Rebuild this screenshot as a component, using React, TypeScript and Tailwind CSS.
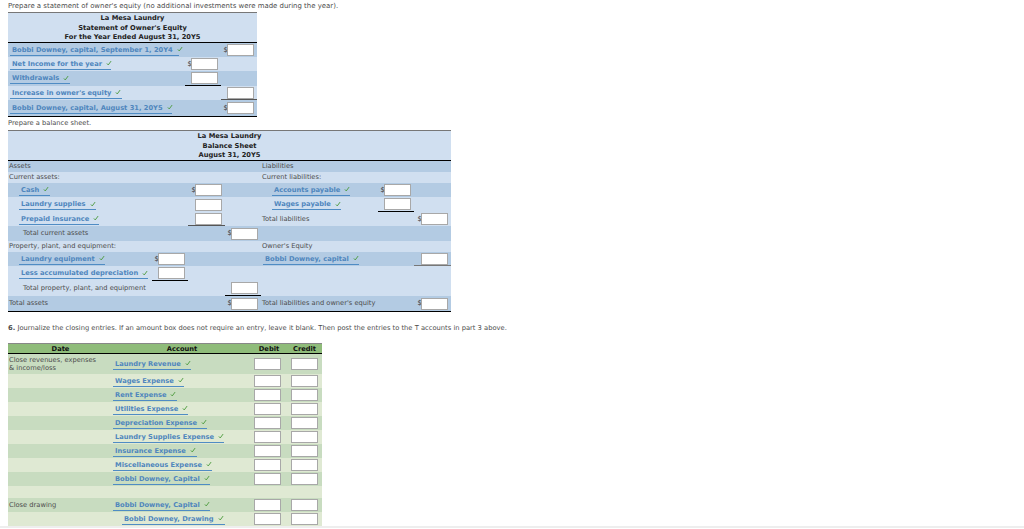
const font = "[font-family:'DejaVu_Sans',Verdana,sans-serif]"

const Check = () => (
  <svg viewBox="0 0 8 8" className="ml-[4px] inline-block h-[6px] w-[6px] align-[-0.5px]">
    <path d="M1.2 4.6 L3 6.6 L6.8 1.4" fill="none" stroke="#4a9a3a" strokeWidth="1.2" />
  </svg>
)

const Box = ({ dollar, className = "pr-[3px]" }: { dollar?: boolean; className?: string }) => (
  <div className={`flex h-full items-center justify-end ${className}`}>
    {dollar && <span className="mr-[-1px] text-[7px] text-[#333]">$</span>}
    <div className="h-[12px] w-[27px] border border-[#a8a8a8] bg-white" />
  </div>
)

const Account = ({ name, width }: { name: string; width: string }) => (
  <div className={`whitespace-nowrap border-b border-[#4f8cc4] pl-[2px] font-bold leading-[10px] text-[#4f86bd] ${width}`}>
    {name}
    <Check />
  </div>
)

function OwnersEquity() {
  const row = "grid grid-cols-[177px_36px_36px] items-center"
  return (
    <div className="ml-[8px] mt-[7px] w-[249px] border-b border-black bg-[#d0dff0] text-[6.7px]">
      <div className="flex h-[31px] flex-col items-center justify-center border-t border-[#777] border-b border-b-black pt-[2px] font-bold leading-[9.5px] text-[#222]">
        <div>La Mesa Laundry</div>
        <div>Statement of Owner's Equity</div>
        <div>For the Year Ended August 31, 20Y5</div>
      </div>
      <div className={`${row} h-[14px] bg-[#b3cbe3]`}>
        <div className="pl-[2px]"><Account name="Bobbi Downey, capital, September 1, 20Y4" width="w-[169px]" /></div>
        <div />
        <Box dollar />
      </div>
      <div className={`${row} h-[14px]`}>
        <div className="pl-[2px]"><Account name="Net Income for the year" width="w-[101px]" /></div>
        <Box dollar />
        <div />
      </div>
      <div className={`${row} h-[15px] bg-[#b3cbe3]`}>
        <div className="pl-[2px]"><Account name="Withdrawals" width="w-[60px]" /></div>
        <Box className="border-b border-black pr-[3px]" />
        <div />
      </div>
      <div className={`${row} h-[14px]`}>
        <div className="pl-[2px]"><Account name="Increase in owner's equity" width="w-[112px]" /></div>
        <div />
        <Box className="border-b border-[#555] pr-[3px]" />
      </div>
      <div className={`${row} h-[16px] bg-[#b3cbe3]`}>
        <div className="pl-[2px]"><Account name="Bobbi Downey, capital, August 31, 20Y5" width="w-[162px]" /></div>
        <div />
        <Box dollar />
      </div>
    </div>
  )
}

function BalanceRow({ h, dark, left, c1, c2, c3, right, c4, c5 }: {
  h: string
  dark?: boolean
  left?: React.ReactNode
  c1?: React.ReactNode
  c2?: React.ReactNode
  c3?: React.ReactNode
  right?: React.ReactNode
  c4?: React.ReactNode
  c5?: React.ReactNode
}) {
  return (
    <div className={`grid grid-cols-[144px_36px_37px_36px_117px_36px_37px] ${h} ${dark ? "bg-[#b3cbe3]" : ""}`}>
      <div className="flex items-center">{left}</div>
      <div>{c1}</div>
      <div>{c2}</div>
      <div>{c3}</div>
      <div className="flex items-center">{right}</div>
      <div>{c4}</div>
      <div>{c5}</div>
    </div>
  )
}

const Plain = ({ text, indent = "pl-[1px]" }: { text: string; indent?: string }) => (
  <div className={`whitespace-nowrap text-[#4d4d4d] ${indent}`}>{text}</div>
)

function BalanceSheet() {
  return (
    <div className="ml-[8px] mt-[1px] w-[443px] border-b border-black bg-[#d0dff0] text-[6.7px]">
      <div className="flex h-[31px] flex-col items-center justify-center border-t border-[#777] border-b border-b-black pt-[2px] font-bold leading-[9.5px] text-[#222]">
        <div>La Mesa Laundry</div>
        <div>Balance Sheet</div>
        <div>August 31, 20Y5</div>
      </div>
      <BalanceRow h="h-[11px]" dark left={<Plain text="Assets" />} right={<Plain text="Liabilities" />} />
      <BalanceRow h="h-[11px]" left={<Plain text="Current assets:" />} right={<Plain text="Current liabilities:" />} />
      <BalanceRow
        h="h-[14px]"
        dark
        left={<div className="pl-[11px]"><Account name="Cash" width="w-[31px]" /></div>}
        c2={<Box dollar />}
        right={<div className="pl-[11px]"><Account name="Accounts payable" width="w-[78px]" /></div>}
        c4={<Box dollar />}
      />
      <BalanceRow
        h="h-[15px]"
        left={<div className="pl-[11px]"><Account name="Laundry supplies" width="w-[77px]" /></div>}
        c2={<Box />}
        right={<div className="pl-[11px]"><Account name="Wages payable" width="w-[69px]" /></div>}
        c4={<Box className="border-b border-black pr-[3px]" />}
      />
      <BalanceRow
        h="h-[14px]"
        left={<div className="pl-[11px]"><Account name="Prepaid insurance" width="w-[80px]" /></div>}
        c2={<Box className="border-b border-[#555] pr-[3px]" />}
        right={<Plain text="Total liabilities" />}
        c5={<Box dollar />}
      />
      <BalanceRow h="h-[15px]" dark left={<Plain text="Total current assets" indent="pl-[15px]" />} c3={<Box dollar />} />
      <BalanceRow h="h-[11px]" left={<Plain text="Property, plant, and equipment:" />} right={<Plain text="Owner's Equity" />} />
      <BalanceRow
        h="h-[14px]"
        dark
        left={<div className="pl-[11px]"><Account name="Laundry equipment" width="w-[86px]" /></div>}
        c1={<Box dollar />}
        right={<div className="pl-[2px]"><Account name="Bobbi Downey, capital" width="w-[96px]" /></div>}
        c5={<Box className="border-b border-[#777] pr-[3px]" />}
      />
      <BalanceRow
        h="h-[15px]"
        left={<div className="pl-[11px]"><Account name="Less accumulated depreciation" width="w-[129px]" /></div>}
        c1={<Box className="border-b border-black pr-[3px]" />}
      />
      <BalanceRow h="h-[15px]" left={<Plain text="Total property, plant, and equipment" indent="pl-[15px]" />} c3={<Box className="border-b border-black pr-[3px]" />} />
      <BalanceRow
        h="h-[15px]"
        dark
        left={<Plain text="Total assets" />}
        c3={<Box dollar />}
        right={<Plain text="Total liabilities and owner's equity" />}
        c5={<Box dollar />}
      />
    </div>
  )
}

const closing = [
  { name: "Wages Expense", width: "w-[71px]" },
  { name: "Rent Expense", width: "w-[64px]" },
  { name: "Utilities Expense", width: "w-[75px]" },
  { name: "Depreciation Expense", width: "w-[94px]" },
  { name: "Laundry Supplies Expense", width: "w-[111px]" },
  { name: "Insurance Expense", width: "w-[84px]" },
  { name: "Miscellaneous Expense", width: "w-[99px]" },
  { name: "Bobbi Downey, Capital", width: "w-[97px]" },
]

function JournalRow({ h, dark, date, account }: { h: string; dark?: boolean; date?: React.ReactNode; account?: React.ReactNode }) {
  return (
    <div className={`grid grid-cols-[105px_138px_36px_35px] ${h} ${dark ? "bg-[#c8dcc0]" : ""}`}>
      <div className="flex items-center">{date}</div>
      <div className="flex items-center">{account}</div>
      <Box className="pr-[6px]" />
      <Box className="pr-[4px]" />
    </div>
  )
}

function Journal() {
  return (
    <div className="ml-[8px] mt-[11px] w-[314px] bg-[#dfe9d3] text-[6.7px]">
      <div className="grid h-[11px] grid-cols-[105px_138px_36px_35px] items-center border-t border-[#888] border-b border-b-black bg-[#8fbc7a] font-bold text-[#111]">
        <div className="text-center">Date</div>
        <div className="text-center">Account</div>
        <div className="text-center">Debit</div>
        <div className="text-center">Credit</div>
      </div>
      <JournalRow
        h="h-[20px]"
        dark
        date={<div className="pl-[1px] leading-[8.5px] text-[#4d4d4d]">Close revenues, expenses<br />&amp; income/loss</div>}
        account={<Account name="Laundry Revenue" width="w-[78px]" />}
      />
      {closing.map((item, i) => (
        <JournalRow key={item.name} h="h-[14px]" dark={i % 2 === 1} account={<Account name={item.name} width={item.width} />} />
      ))}
      <div className="h-[12px]" />
      <JournalRow
        h="h-[14px]"
        dark
        date={<Plain text="Close drawing" />}
        account={<Account name="Bobbi Downey, Capital" width="w-[97px]" />}
      />
      <JournalRow
        h="h-[14px]"
        account={<div className="pl-[9px]"><Account name="Bobbi Downey, Drawing" width="w-[103px]" /></div>}
      />
    </div>
  )
}

export default function App() {
  return (
    <div className={`h-[529px] w-[1024px] overflow-hidden bg-white pt-[1px] ${font}`}>
      <div className="h-[4px] whitespace-nowrap pl-[8px] pt-[1px] text-[6.95px] leading-[8px] text-[#4d4d4d]">
        Prepare a statement of owner's equity (no additional investments were made during the year).
      </div>
      <OwnersEquity />
      <div className="h-[12px] pl-[8px] pt-[2px] text-[6.7px] leading-[8px] text-[#4d4d4d]">Prepare a balance sheet.</div>
      <BalanceSheet />
      <div className="whitespace-nowrap pl-[8px] pt-[12px] text-[6.74px] leading-[8px] text-[#4d4d4d]">
        <b className="font-bold">6.</b> Journalize the closing entries. If an amount box does not require an entry, leave it blank. Then post the entries to the T accounts in part 3 above.
      </div>
      <Journal />
      <div className="h-[2px] bg-[#eee]" />
    </div>
  )
}
